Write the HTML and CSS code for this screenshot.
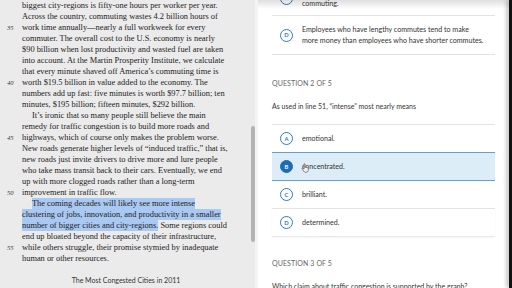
FILE: index.html
```html
<!DOCTYPE html>
<html lang="en">
<head>
    <meta charset="UTF-8">
    <title>Reading Test</title>
    <link rel="stylesheet" href="styles.css">
</head>
<body>
    <div class="passage">
        <div class="passage-text">
            <div class="line"><span class="num"></span><span>biggest city-regions is fifty-one hours per worker per year.</span></div>
            <div class="line"><span class="num"></span><span>Across the country, commuting wastes 4.2 billion hours of</span></div>
            <div class="line"><span class="num">35</span><span>work time annually—nearly a full workweek for every</span></div>
            <div class="line"><span class="num"></span><span>commuter. The overall cost to the U.S. economy is nearly</span></div>
            <div class="line"><span class="num"></span><span>$90 billion when lost productivity and wasted fuel are taken</span></div>
            <div class="line"><span class="num"></span><span>into account. At the Martin Prosperity Institute, we calculate</span></div>
            <div class="line"><span class="num"></span><span>that every minute shaved off America’s commuting time is</span></div>
            <div class="line"><span class="num">40</span><span>worth $19.5 billion in value added to the economy. The</span></div>
            <div class="line"><span class="num"></span><span>numbers add up fast: five minutes is worth $97.7 billion; ten</span></div>
            <div class="line"><span class="num"></span><span>minutes, $195 billion; fifteen minutes, $292 billion.</span></div>
            <div class="line indent"><span class="num"></span><span>It’s ironic that so many people still believe the main</span></div>
            <div class="line"><span class="num"></span><span>remedy for traffic congestion is to build more roads and</span></div>
            <div class="line"><span class="num">45</span><span>highways, which of course only makes the problem worse.</span></div>
            <div class="line"><span class="num"></span><span>New roads generate higher levels of “induced traffic,” that is,</span></div>
            <div class="line"><span class="num"></span><span>new roads just invite drivers to drive more and lure people</span></div>
            <div class="line"><span class="num"></span><span>who take mass transit back to their cars. Eventually, we end</span></div>
            <div class="line"><span class="num"></span><span>up with more clogged roads rather than a long-term</span></div>
            <div class="line"><span class="num">50</span><span>improvement in traffic flow.</span></div>
            <div class="line indent"><span class="num"></span><span class="hl">The coming decades will likely see more intense</span></div>
            <div class="line"><span class="num"></span><span class="hl">clustering of jobs, innovation, and productivity in a smaller</span></div>
            <div class="line"><span class="num"></span><span><span class="hl">number of bigger cities and city-regions.</span> Some regions could</span></div>
            <div class="line"><span class="num"></span><span>end up bloated beyond the capacity of their infrastructure,</span></div>
            <div class="line"><span class="num">55</span><span>while others struggle, their promise stymied by inadequate</span></div>
            <div class="line"><span class="num"></span><span>human or other resources.</span></div>
        </div>
        <div class="figure-title">The Most Congested Cities in 2011</div>
        <div class="figure-sub">Hours lost per commuter to traffic delays in the U.S.</div>
        <div class="scrollbar"></div>
    </div>

    <div class="questions">
        <div class="scroll">
            <div class="option first">
                <span class="letter">C</span>
                <span class="opt-text">Employees with lengthy commutes are less likely to enjoy<br>commuting.</span>
            </div>
            <div class="option">
                <span class="letter">D</span>
                <span class="opt-text">Employees who have lengthy commutes tend to make<br>more money than employees who have shorter commutes.</span>
            </div>

            <div class="q-label">QUESTION 2 OF 5</div>
            <div class="q-text">As used in line 51, “intense” most nearly means</div>
            <div class="options">
                <div class="option"><span class="letter">A</span><span class="opt-text">emotional.</span></div>
                <div class="option selected"><span class="letter">B</span><span class="opt-text">concentrated.</span>
                    <svg class="cursor" width="9" height="10" viewBox="0 0 9 10">
                        <path d="M3 1.2 C3 .5 4 .5 4 1.2 V4.6 C4.2 4.1 5 4.1 5.1 4.7 C5.3 4.2 6.1 4.3 6.2 4.9 C6.5 4.5 7.3 4.6 7.3 5.3 V7 C7.3 8.3 6.4 9.2 5.2 9.2 H4.4 C3.6 9.2 3 8.8 2.6 8.1 L1.1 5.6 C.8 5 1.5 4.6 2 5.1 L3 6.1 Z" fill="#f2f2f2" stroke="#555" stroke-width=".7"/>
                    </svg>
                </div>
                <div class="option"><span class="letter">C</span><span class="opt-text">brilliant.</span></div>
                <div class="option last"><span class="letter">D</span><span class="opt-text">determined.</span></div>
            </div>

            <div class="q-label next">QUESTION 3 OF 5</div>
            <div class="q-text">Which claim about traffic congestion is supported by the graph?</div>
        </div>
    </div>
    <div class="edge"></div>
</body>
</html>
```

FILE: styles.css
```css
html, body {
    margin: 0;
    height: 288px;
    overflow: hidden;
}
body {
    display: flex;
    background: #fff;
}
.passage {
    position: relative;
    width: 255px;
    flex: none;
    background: #ebebeb;
    border-right: 3px solid #f4f4f4;
    overflow: hidden;
    color: #222;
}
.passage-text {
    font-family: "Liberation Serif", "Times New Roman", serif;
    font-size: 8.4px;
    line-height: 11px;
}
.line {
    display: flex;
    white-space: nowrap;
}
.num {
    width: 22px;
    flex: none;
    padding-left: 7px;
    box-sizing: border-box;
    font-style: italic;
    font-size: 6.5px;
    color: #333;
}
.indent .num {
    width: 32px;
}
.hl {
    display: inline-block;
    background: #a9c8f2;
}
.figure-title {
    margin-top: 11px;
    width: 230px;
    padding-left: 22px;
    box-sizing: border-box;
    text-align: center;
    font-family: "Lato", "Noto Sans", sans-serif;
    font-size: 7px;
    line-height: 11px;
    color: #333;
}
.figure-sub {
    width: 230px;
    padding-left: 22px;
    box-sizing: border-box;
    text-align: center;
    font-family: "Lato", "Noto Sans", sans-serif;
    font-size: 6px;
    line-height: 9px;
    color: #555;
}
.scrollbar {
    position: absolute;
    right: 0;
    top: 126px;
    width: 4px;
    height: 116px;
    border-radius: 2px;
    background: #b3b3b3;
}
.questions {
    position: relative;
    flex: 1;
    overflow: hidden;
    font-family: "Lato", "Noto Sans", sans-serif;
    font-size: 7.1px;
    line-height: 11px;
    color: #333;
}
.questions::before {
    content: "";
    position: absolute;
    left: 0;
    right: 0;
    top: 0;
    height: 9px;
    background: linear-gradient(rgba(0,0,0,0.13), rgba(0,0,0,0));
    z-index: 2;
}
.scroll {
    margin: -21px 14px 0;
}
.option {
    position: relative;
    display: flex;
    align-items: center;
    padding: 8px 0;
    border-bottom: 1px solid #e3e3e3;
}
.option.first {
    padding-bottom: 6px;
}
.opt-text {
    white-space: nowrap;
}
.options {
    border-top: 1px solid #e3e3e3;
}
.option.last {
    border-bottom-color: #e8e8e8;
    box-shadow: 0 1px 2px rgba(0,0,0,0.04);
}
.letter {
    width: 13px;
    height: 13px;
    box-sizing: border-box;
    margin: -1px 9px -1px 8px;
    flex: none;
    border: 1px solid #2b7cc0;
    border-radius: 50%;
    display: flex;
    align-items: center;
    justify-content: center;
    font-size: 5.8px;
    line-height: 1;
    font-weight: bold;
    color: #2b7cc0;
}
.option.selected {
    background: #dcedf7;
    border-top: 1px solid #5fa3d3;
    border-bottom: 1px solid #5fa3d3;
    margin-top: -1px;
}
.selected .letter {
    background: #1b6db6;
    border-color: #1b6db6;
    color: #fff;
}
.cursor {
    position: absolute;
    left: 29px;
    top: 10px;
}
.q-label {
    margin-top: 23px;
    font-size: 7px;
    color: #666;
    letter-spacing: 0.1px;
}
.q-label.next {
    margin-top: 21px;
}
.q-text {
    margin: 12px 0 12px;
    font-size: 7px;
    color: #333;
}
.edge {
    width: 3px;
    flex: none;
    background: #111;
    box-shadow: -2px 0 4px rgba(0,0,0,0.35);
}
```
